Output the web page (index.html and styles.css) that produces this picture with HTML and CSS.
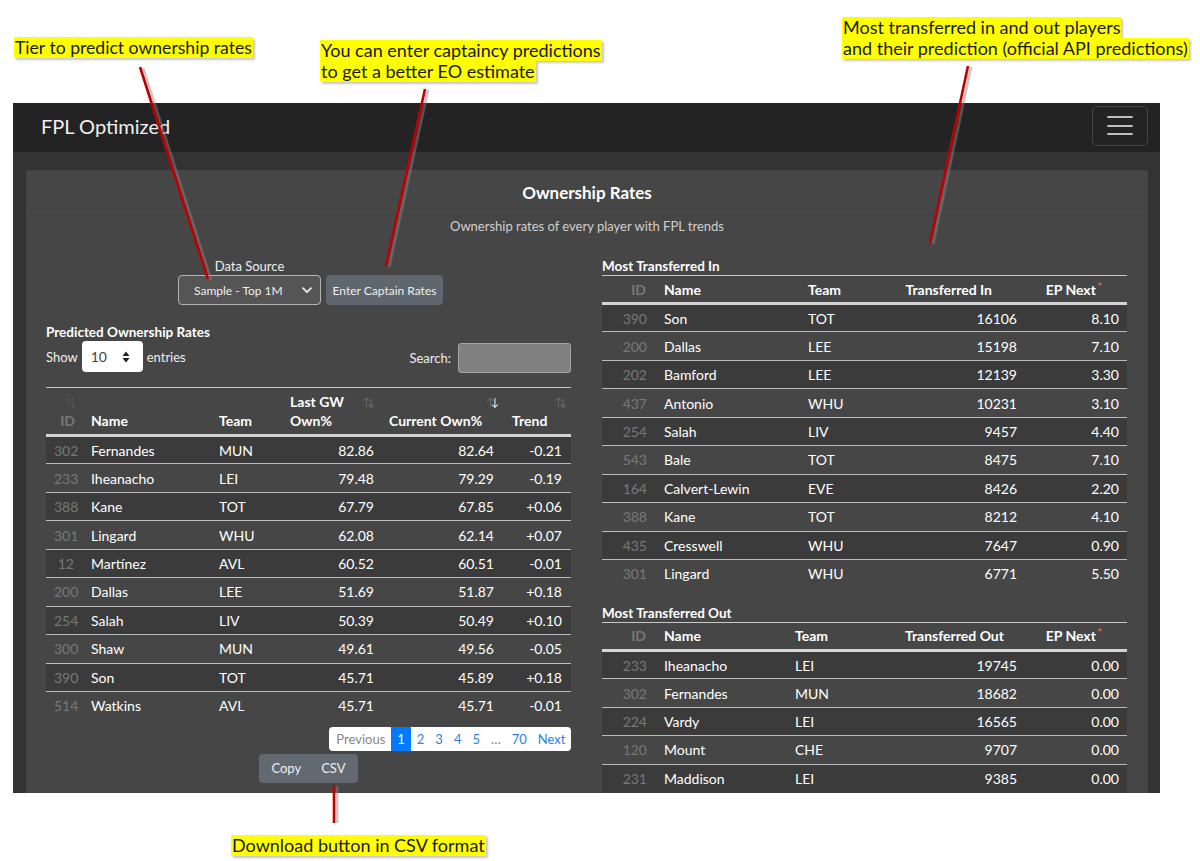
FILE: index.html
```html
<!DOCTYPE html>
<html lang="en">
<head>
<meta charset="utf-8">
<title>FPL Optimized - Ownership Rates</title>
<link rel="stylesheet" href="styles.css">
</head>
<body>
<div class="frame">
  <nav class="navbar">
    <span class="brand">FPL Optimized</span>
    <button class="toggler" type="button" aria-label="menu"><span></span><span></span><span></span></button>
  </nav>
  <main class="content">
    <section class="card">
      <header class="card-header"><h1>Ownership Rates</h1></header>
      <p class="subtitle">Ownership rates of every player with FPL trends</p>
      <div class="cols">
        <div class="col">
          <div class="source">
            <div class="source-field">
              <span class="source-label">Data Source</span>
              <div class="select">
                <span>Sample - Top 1M</span>
                <svg width="10" height="7" viewBox="0 0 10 7"><path d="M1 1.2 L5 5.2 L9 1.2" fill="none" stroke="#e8e8e8" stroke-width="1.8" stroke-linecap="round" stroke-linejoin="round"/></svg>
              </div>
            </div>
            <button class="btn btn-captain" type="button">Enter Captain Rates</button>
          </div>
          <h2 class="tcaption tcaption-left">Predicted Ownership Rates</h2>
          <div class="dt-top">
            <div class="length">Show
              <div class="num">10
                <svg width="8" height="12" viewBox="0 0 8 12"><path d="M4 0.5 L7.5 5 L0.5 5 Z M4 11.5 L7.5 7 L0.5 7 Z" fill="#222"/></svg>
              </div>
              entries</div>
            <div class="search">Search: <span class="search-input"></span></div>
          </div>
          <table class="dt own">
            <colgroup><col style="width:36px"><col style="width:129px"><col style="width:70px"><col style="width:101px"><col style="width:120px"><col style="width:69px"></colgroup>
            <thead>
              <tr>
                <th class="c-id">ID<span class="sort s-id faint"></span></th>
                <th class="c-name">Name</th>
                <th class="c-team">Team</th>
                <th class="c-last">Last GW<br>Own%<span class="sort s-last"></span></th>
                <th class="c-cur">Current Own%<span class="sort s-cur desc"></span></th>
                <th class="c-trend">Trend<span class="sort s-trend"></span></th>
              </tr>
            </thead>
            <tbody>
              <tr><td class="id">302</td><td>Fernandes</td><td>MUN</td><td class="r">82.86</td><td class="r">82.64</td><td class="r tr">-0.21</td></tr>
              <tr><td class="id">233</td><td>Iheanacho</td><td>LEI</td><td class="r">79.48</td><td class="r">79.29</td><td class="r tr">-0.19</td></tr>
              <tr><td class="id">388</td><td>Kane</td><td>TOT</td><td class="r">67.79</td><td class="r">67.85</td><td class="r tr">+0.06</td></tr>
              <tr><td class="id">301</td><td>Lingard</td><td>WHU</td><td class="r">62.08</td><td class="r">62.14</td><td class="r tr">+0.07</td></tr>
              <tr><td class="id">12</td><td>Martínez</td><td>AVL</td><td class="r">60.52</td><td class="r">60.51</td><td class="r tr">-0.01</td></tr>
              <tr><td class="id">200</td><td>Dallas</td><td>LEE</td><td class="r">51.69</td><td class="r">51.87</td><td class="r tr">+0.18</td></tr>
              <tr><td class="id">254</td><td>Salah</td><td>LIV</td><td class="r">50.39</td><td class="r">50.49</td><td class="r tr">+0.10</td></tr>
              <tr><td class="id">300</td><td>Shaw</td><td>MUN</td><td class="r">49.61</td><td class="r">49.56</td><td class="r tr">-0.05</td></tr>
              <tr><td class="id">390</td><td>Son</td><td>TOT</td><td class="r">45.71</td><td class="r">45.89</td><td class="r tr">+0.18</td></tr>
              <tr><td class="id">514</td><td>Watkins</td><td>AVL</td><td class="r">45.71</td><td class="r">45.71</td><td class="r tr">-0.01</td></tr>
            </tbody>
          </table>
          <div class="pager">
            <span class="pg prev">Previous</span><span class="pg active">1</span><span class="pg">2</span><span class="pg">3</span><span class="pg">4</span><span class="pg">5</span><span class="pg ell">…</span><span class="pg">70</span><span class="pg">Next</span>
          </div>
          <div class="export">
            <button class="btn exp" type="button">Copy</button><button class="btn exp" type="button">CSV</button>
          </div>
        </div>
        <div class="col">
          <h2 class="tcaption">Most Transferred In</h2>
          <table class="dt tx">
            <colgroup><col style="width:53px"><col style="width:145px"><col style="width:97px"><col style="width:128px"><col style="width:102px"></colgroup>
            <thead><tr><th class="x-id">ID</th><th class="x-name">Name</th><th class="x-team">Team</th><th class="x-num">Transferred In</th><th class="x-ep">EP Next<sup>*</sup></th></tr></thead>
            <tbody>
              <tr><td class="id">390</td><td>Son</td><td>TOT</td><td class="r">16106</td><td class="r">8.10</td></tr>
              <tr><td class="id">200</td><td>Dallas</td><td>LEE</td><td class="r">15198</td><td class="r">7.10</td></tr>
              <tr><td class="id">202</td><td>Bamford</td><td>LEE</td><td class="r">12139</td><td class="r">3.30</td></tr>
              <tr><td class="id">437</td><td>Antonio</td><td>WHU</td><td class="r">10231</td><td class="r">3.10</td></tr>
              <tr><td class="id">254</td><td>Salah</td><td>LIV</td><td class="r">9457</td><td class="r">4.40</td></tr>
              <tr><td class="id">543</td><td>Bale</td><td>TOT</td><td class="r">8475</td><td class="r">7.10</td></tr>
              <tr><td class="id">164</td><td>Calvert-Lewin</td><td>EVE</td><td class="r">8426</td><td class="r">2.20</td></tr>
              <tr><td class="id">388</td><td>Kane</td><td>TOT</td><td class="r">8212</td><td class="r">4.10</td></tr>
              <tr><td class="id">435</td><td>Cresswell</td><td>WHU</td><td class="r">7647</td><td class="r">0.90</td></tr>
              <tr><td class="id">301</td><td>Lingard</td><td>WHU</td><td class="r">6771</td><td class="r">5.50</td></tr>
            </tbody>
          </table>
          <h2 class="tcaption tcaption-out">Most Transferred Out</h2>
          <table class="dt tx">
            <colgroup><col style="width:53px"><col style="width:132px"><col style="width:110px"><col style="width:128px"><col style="width:102px"></colgroup>
            <thead><tr><th class="x-id">ID</th><th class="x-name">Name</th><th class="x-team">Team</th><th class="x-num">Transferred Out</th><th class="x-ep">EP Next<sup>*</sup></th></tr></thead>
            <tbody>
              <tr><td class="id">233</td><td>Iheanacho</td><td>LEI</td><td class="r">19745</td><td class="r">0.00</td></tr>
              <tr><td class="id">302</td><td>Fernandes</td><td>MUN</td><td class="r">18682</td><td class="r">0.00</td></tr>
              <tr><td class="id">224</td><td>Vardy</td><td>LEI</td><td class="r">16565</td><td class="r">0.00</td></tr>
              <tr><td class="id">120</td><td>Mount</td><td>CHE</td><td class="r">9707</td><td class="r">0.00</td></tr>
              <tr><td class="id">231</td><td>Maddison</td><td>LEI</td><td class="r">9385</td><td class="r">0.00</td></tr>
            </tbody>
          </table>
        </div>
      </div>
    </section>
  </main>
</div>

<svg class="arrows" width="1200" height="861" viewBox="0 0 1200 861">
  <g stroke="#8a8a8a" stroke-width="3" opacity="0.45">
    <line x1="143" y1="68" x2="211" y2="280"/>
    <line x1="428" y1="90" x2="389" y2="267"/>
    <line x1="971" y1="67" x2="933" y2="244"/>
    <line x1="337" y1="786" x2="337" y2="823"/>
  </g>
  <g stroke="#c00000" stroke-width="2.6">
    <line x1="140" y1="67" x2="208" y2="279"/>
    <line x1="425" y1="89" x2="386" y2="266"/>
    <line x1="968" y1="66" x2="930" y2="243"/>
    <line x1="334" y1="785" x2="334" y2="823"/>
  </g>
</svg>

<div class="note n1"><span>Tier to predict ownership rates</span></div>
<div class="note n2"><span>You can enter captaincy predictions</span><span>to get a better EO estimate</span></div>
<div class="note n3"><span>Most transferred in and out players</span><span>and their prediction (official API predictions)</span></div>
<div class="note n4"><span>Download button in CSV format</span></div>
</body>
</html>
```
FILE: styles.css
```css
* { box-sizing: border-box; }
html, body { margin: 0; padding: 0; background: #fff; }
body {
  position: relative;
  width: 1200px;
  height: 861px;
  overflow: hidden;
  font-family: Lato, "Open Sans", sans-serif;
}

.frame {
  margin: 103px 0 0 13px;
  width: 1147px;
  height: 690px;
  overflow: hidden;
  background: #333;
  display: flex;
  flex-direction: column;
}

.navbar {
  height: 49px;
  flex: none;
  background: #232323;
  display: flex;
  align-items: center;
  justify-content: space-between;
  padding: 0 12px 4px 28px;
}
.brand { color: #f0f0f0; font-size: 20px; }
.toggler {
  width: 56px;
  height: 40px;
  border: 1px solid #474747;
  border-radius: 5px;
  background: transparent;
  display: flex;
  flex-direction: column;
  justify-content: center;
  align-items: center;
  gap: 6.5px;
  padding: 0;
}
.toggler span { display: block; width: 26px; height: 2px; background: #bdbdbd; border-radius: 1px; }

.content { flex: 1; padding: 18px 12px 0 13px; }
.card { background: #464646; border-radius: 4px 4px 0 0; height: 100%; }
.card-header {
  height: 46px;
  border-bottom: 1px solid #8e1f2f;
  display: flex;
  align-items: center;
  justify-content: center;
}
.card-header h1 { margin: 0; font-size: 17px; font-weight: bold; color: #fff; }
.subtitle { margin: 2px 0 0; text-align: center; font-size: 13px; line-height: 16px; color: #cfcfcf; }

.cols {
  display: grid;
  grid-template-columns: 525px 525px;
  column-gap: 31px;
  padding: 24px 0 0 20px;
}
.col { min-width: 0; }

.source { display: flex; justify-content: center; align-items: flex-end; gap: 5px; margin-left: 4px; }
.source-field { display: flex; flex-direction: column; align-items: center; }
.source-label { font-size: 13px; line-height: 17px; color: #eee; }
.select {
  width: 143px;
  height: 30px;
  background: #555;
  border: 1px solid #b4b4b4;
  border-radius: 4px;
  color: #eee;
  font-size: 12px;
  display: flex;
  align-items: center;
  justify-content: space-between;
  padding: 0 8px 0 15px;
}
.btn { font-family: inherit; color: #eee; border: none; cursor: pointer; }
.btn-captain { height: 30px; width: 117px; background: #5f666d; border-radius: 4px; font-size: 12px; padding: 0; }

.tcaption { margin: 0; font-size: 13.5px; line-height: 16px; font-weight: bold; color: #fff; }
.tcaption-left { margin-top: 19px; }
.tcaption-out { margin-top: 17px; }

.dt-top { margin-top: 1px; height: 31px; display: flex; justify-content: space-between; align-items: center; font-size: 13px; color: #eee; }
.length { display: flex; align-items: center; gap: 4px; }
.num {
  width: 61px;
  height: 31px;
  background: #fff;
  border-radius: 4px;
  color: #444;
  font-size: 14px;
  display: flex;
  align-items: center;
  justify-content: space-between;
  padding: 0 13px 0 9px;
}
.search { display: flex; align-items: center; gap: 7px; padding-top: 2px; }
.search-input { display: block; width: 113px; height: 30px; background: #808080; border: 1px solid #a5a5a5; border-radius: 3px; }

.dt {
  margin-top: 15px;
  width: 525px;
  table-layout: fixed;
  border-collapse: collapse;
  border-top: 1px solid #c9c9c9;
  font-size: 14px;
  color: #fff;
}
.tx { margin-top: 1px; }
.dt th { font-weight: bold; text-align: left; border-bottom: 3px solid #d4d4d4; padding: 0 8px; white-space: nowrap; }
.dt td { height: 28.45px; padding: 0 8px; border-top: 1px solid #bcbcbc; white-space: nowrap; }
.dt tbody tr:first-child td { border-top: none; }
.dt tbody tr:nth-child(odd) td { background: #3b3b3b; }
.dt .id { text-align: right; color: #787878; }
.dt .r { text-align: right; }

.own th { height: 48px; vertical-align: bottom; padding-bottom: 4px; line-height: 19px; position: relative; }
.own .c-id { text-align: right; padding-right: 7px; color: #787878; }
.own .c-name { padding-left: 9px; }
.own .c-last { padding-left: 9px; }
.own .c-cur { padding-left: 7px; }
.own .c-trend { padding-left: 10px; }
.own td:nth-child(2) { padding-left: 9px; }
.own .tr { padding-right: 9px; }

.sort { position: absolute; top: 8px; font-size: 11px; line-height: 12px; color: #6e6e6e; font-weight: normal; display: flex; }
.sort::before { content: "↑"; display: inline-block; width: 4.5px; }
.sort::after { content: "↓"; display: inline-block; width: 4.5px; }
.sort.desc::after { color: #f2f2f2; }
.sort.faint { color: #555; }
.s-id { right: 9px; }
.s-last { right: 11px; }
.s-cur { right: 7px; }
.s-trend { right: 8px; }

.tx th { height: 28px; vertical-align: middle; }
.tx .x-id { text-align: right; padding-right: 9px; color: #787878; }
.tx .x-name { padding-left: 9px; }
.tx td:nth-child(2) { padding-left: 9px; }
.tx .x-num { text-align: right; padding-right: 33px; }
.tx .x-ep { text-align: right; padding-right: 25px; }
.tx sup { color: #e26a6a; font-size: 12px; font-weight: normal; vertical-align: 4px; line-height: 0; margin-left: 1px; }

.pager {
  margin: 7px 0 0 auto;
  width: fit-content;
  height: 24px;
  background: #fff;
  border-radius: 4px;
  display: flex;
  align-items: stretch;
  font-size: 13px;
  overflow: hidden;
}
.pg { display: flex; align-items: center; padding: 0 5.5px; color: #2f7fe0; }
.pg.prev { color: #888; padding-left: 7px; }
.pg.active { background: #007bff; color: #fff; padding: 0 6.5px; }
.pg.ell { color: #888; }

.export { margin-top: 3px; display: flex; justify-content: center; }
.exp { height: 29px; padding: 0 10px; background: #626970; font-size: 13px; }
.exp:first-child { border-radius: 4px 0 0 4px; padding-left: 12px; }
.exp:last-child { border-radius: 0 4px 4px 0; padding-right: 12px; }

.arrows { position: absolute; left: 0; top: 0; pointer-events: none; }

.note { position: absolute; font-family: Lato, "Open Sans", sans-serif; font-size: 18px; line-height: 21px; color: #1b1b1b; }
.note span { display: block; width: fit-content; background: #ffff00; box-shadow: 2px 2px 2px rgba(0,0,0,0.22); padding: 0 1px; }
.n1 { left: 14px; top: 37px; font-size: 17.6px; }
.n2 { left: 320px; top: 40px; }
.n3 { left: 842px; top: 17px; }
.n4 { left: 231px; top: 835px; }
```
